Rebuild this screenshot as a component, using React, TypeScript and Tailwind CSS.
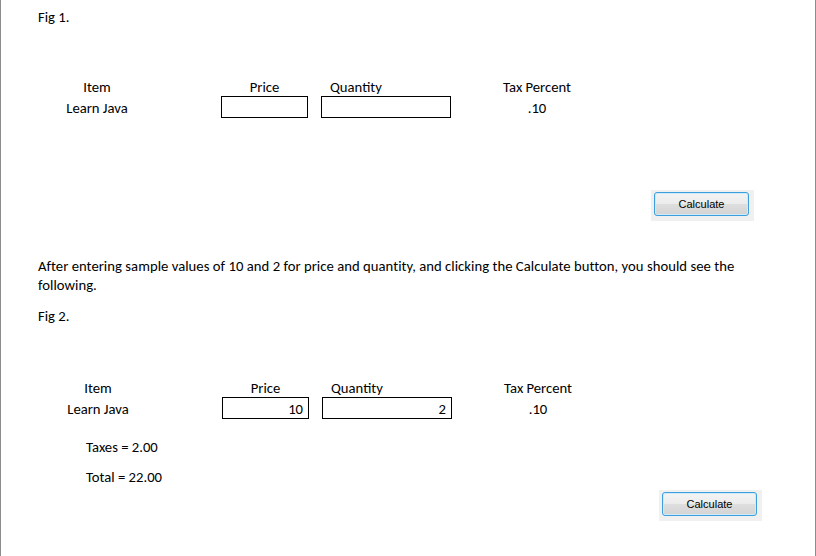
import React from "react";

const docFont = { fontFamily: '"Carlito", "Lato", "Open Sans", sans-serif' };

function CalcButton({ left }: { left: string }) {
  return (
    <div className={`${left} h-[31px] w-[103px] bg-[#f0f0f0] pl-[3px] pt-[2px]`}>
      <button
        className="flex h-[24px] w-[95px] items-center justify-center rounded-[3px] border border-[#3c9fdc] bg-[linear-gradient(#f4f4f4,#ececec_48%,#dedede_52%,#d3d3d3)] text-[11px] text-black shadow-[inset_0_0_0_1px_#cfeaf9]"
        style={{ fontFamily: '"Liberation Sans", Arial, sans-serif' }}
      >
        Calculate
      </button>
    </div>
  );
}

function Grid({ price, qty }: { price?: string; qty?: string }) {
  return (
    <>
      <div className="flex h-[19px] items-center pl-[65px]">
        <div className="w-[62px] text-center">Item</div>
        <div className="ml-[93px] w-[87px] text-center">Price</div>
        <div className="ml-[13px] w-[130px] pl-[9px]">Quantity</div>
        <div className="ml-[46px] w-[80px] text-center">Tax Percent</div>
      </div>
      <div className="flex h-[22px] items-center pl-[65px]">
        <div className="w-[62px] pt-[1px] text-center">Learn Java</div>
        <div className="ml-[93px] flex h-[22px] w-[87px] items-center justify-end border border-black pr-[5px] pt-[1px]">
          {price}
        </div>
        <div className="ml-[13px] flex h-[22px] w-[130px] items-center justify-end border border-black pr-[5px] pt-[1px]">
          {qty}
        </div>
        <div className="ml-[46px] w-[80px] pt-[1px] text-center">.10</div>
      </div>
    </>
  );
}

export default function App() {
  return (
    <div
      className="h-[556px] w-[816px] overflow-hidden border-x border-[#8c8c8c] bg-white text-[14.67px] leading-[20px] text-black"
      style={docFont}
    >
      <div className="pl-[37px] pt-[7px]">Fig 1.</div>

      <div className="mt-[50px]">
        <Grid />
      </div>

      <div className="mt-[72px] flex">
        <CalcButton left="ml-[650px]" />
      </div>

      <p className="mt-[36px] pl-[37px] pr-[60px] leading-[19px] tracking-[0.04px]">
        After entering sample values of 10 and 2 for price and quantity, and clicking the
        Calculate button, you should see the following.
      </p>

      <div className="mt-[11px] pl-[37px]">Fig 2.</div>

      <div className="mt-[52px] pl-[1px]">
        <Grid price="10" qty="2" />
      </div>

      <div className="mt-[18px] pl-[85px]">Taxes = 2.00</div>
      <div className="mt-[10px] pl-[85px]">Total = 22.00</div>

      <div className="mt-[3px] flex">
        <CalcButton left="ml-[658px]" />
      </div>
    </div>
  );
}
